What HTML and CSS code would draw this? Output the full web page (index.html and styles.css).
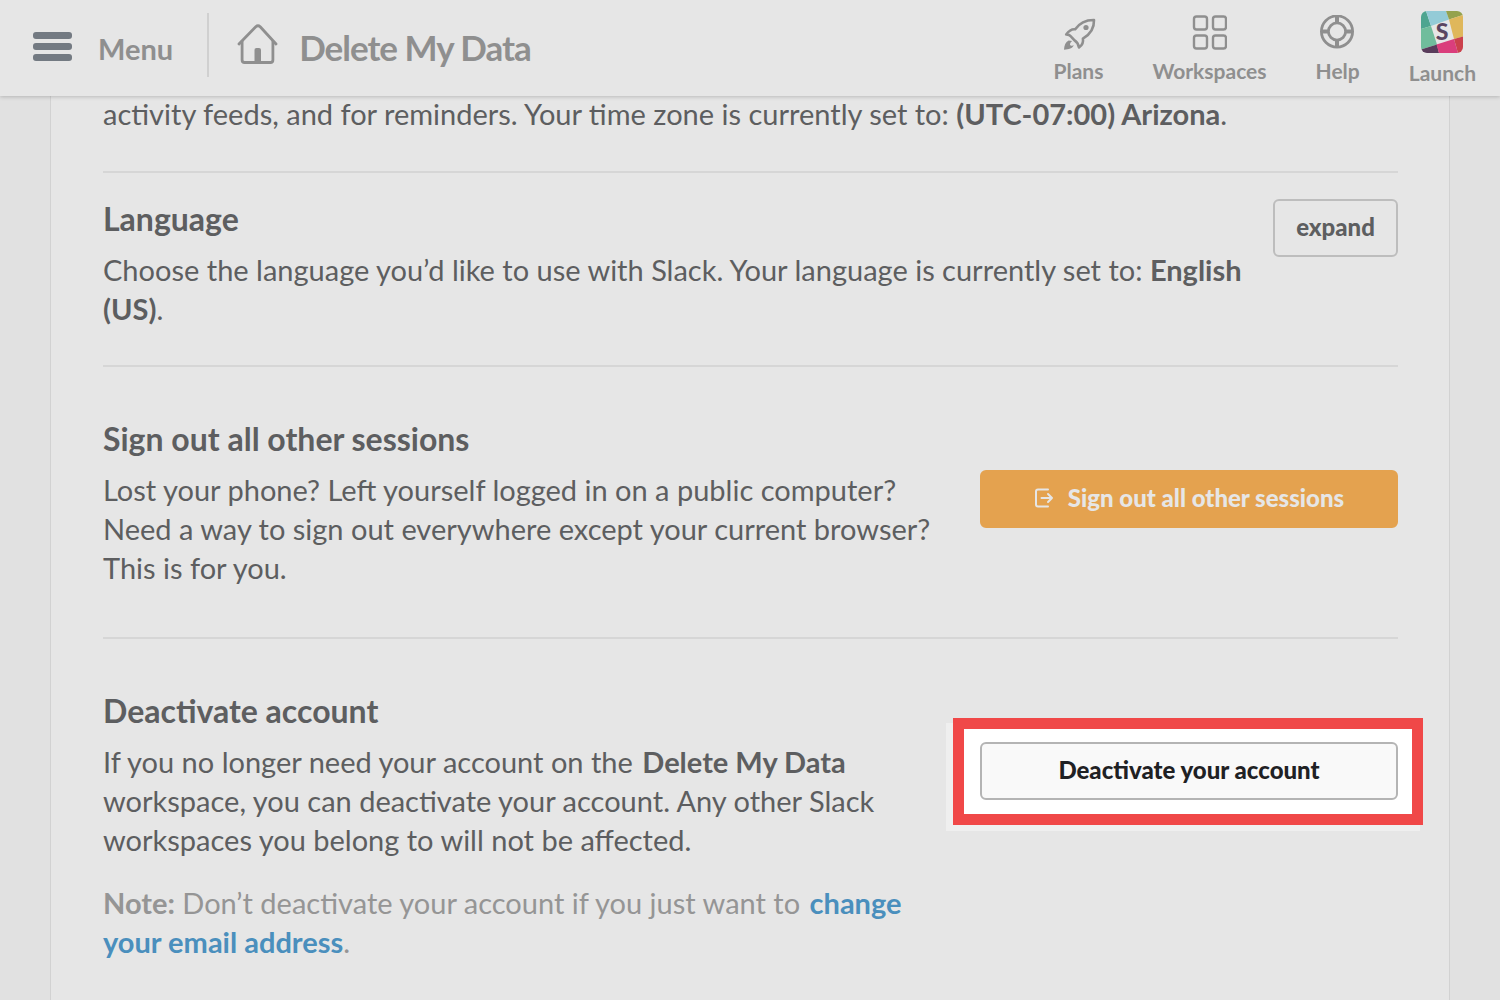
FILE: index.html
```html
<!DOCTYPE html>
<html lang="en">
<head>
<meta charset="utf-8">
<meta name="viewport" content="width=device-width, initial-scale=1">
<title>Account settings | Delete My Data</title>
<link rel="stylesheet" href="styles.css">
</head>
<body>
<header class="topbar">
  <button class="menu" type="button">
    <svg class="menu-icon" width="40" height="30" viewBox="0 0 40 30" aria-hidden="true">
      <rect x="1" y="0" width="39" height="7" rx="3"/>
      <rect x="1" y="11" width="39" height="7" rx="3"/>
      <rect x="1" y="22" width="39" height="7" rx="3"/>
    </svg>
    <span>Menu</span>
  </button>
  <a class="team" href="#">
    <svg width="42" height="42" viewBox="0 0 42 42" fill="none" stroke="#8f8f8f" stroke-width="2.8" stroke-linecap="round" stroke-linejoin="round" aria-hidden="true">
      <path d="M2 20 L18.800 2.700 Q21 0.700 23.200 2.700 L39 20"/>
      <path d="M5.100 17.500 V36 Q5.100 38.500 7.600 38.500 H33.400 Q35.900 38.500 35.900 36 V17.500"/>
      <path d="M17.500 38.500 V26 Q17.500 24 19.500 24 H22 Q24 24 24 26 V38.500 Z" fill="#8f8f8f" stroke="none"/>
    </svg>
    <span>Delete My Data</span>
  </a>
  <nav class="links" aria-label="Site">
    <a href="#">
      <svg width="36" height="36" viewBox="0 0 36 36" fill="none" stroke="#8f8f8f" stroke-width="2.6" stroke-linejoin="round" aria-hidden="true">
        <path d="M34 5 C26 4.900 19.500 8 15.200 14.300 C11.500 13.800 9 15.600 6.200 19.400 Q9.500 19.500 11.300 21.800 L14.300 25.200 Q18 27.500 19 32.500 C22.500 30 23.600 27.300 22.900 23.700 C30 19.500 34.300 13.500 34 5 Z"/>
        <circle cx="26" cy="12.500" r="2.600" fill="#8f8f8f" stroke="none"/>
        <path d="M8.600 25.400 C5.500 27 4.200 30 4 34.800 C9 34.400 12.500 33.500 13.800 30.300 C12 31 10.500 30.600 10 29.700 C10 28 11 26.800 12.200 26 Z" fill="#8f8f8f" stroke="none"/>
      </svg>
      <span>Plans</span>
    </a>
    <a href="#">
      <svg width="36" height="36" viewBox="0 0 36 36" fill="none" stroke="#8f8f8f" stroke-width="2.400" aria-hidden="true">
        <rect x="3" y="1.500" width="13" height="13" rx="2.500"/>
        <rect x="22" y="1.500" width="13" height="13" rx="2.500"/>
        <rect x="3" y="20.500" width="13" height="13" rx="2.500"/>
        <rect x="22" y="20.500" width="13" height="13" rx="2.500"/>
      </svg>
      <span>Workspaces</span>
    </a>
    <a href="#">
      <svg width="36" height="36" viewBox="0 -2 36 36" fill="none" stroke="#8f8f8f" stroke-width="2.800" aria-hidden="true">
        <circle cx="17" cy="14.500" r="15.600"/>
        <circle cx="17" cy="14.500" r="8.600"/>
        <path d="M17 -1 V6 M17 23 V30 M1.500 14.500 H8.500 M25.500 14.500 H32.500" stroke-width="4"/>
      </svg>
      <span>Help</span>
    </a>
    <a class="launch" href="#">
      <svg width="42" height="42" viewBox="0 0 42 42" aria-hidden="true">
        <defs><clipPath id="tile"><rect width="42" height="42" rx="6"/></clipPath></defs>
        <g clip-path="url(#tile)">
          <rect width="42" height="42" fill="#e6e6e6"/>
          <path d="M0 0 H5 L10 15 L0 18 Z" fill="#4ea590"/>
          <path d="M5 0 H25 L28 8.500 L10 15 Z" fill="#94cbd7"/>
          <path d="M25 0 H42 V4 L28 8.500 Z" fill="#94a24d"/>
          <path d="M28 8.500 L42 4 V25.500 L33 28 Z" fill="#dfb75b"/>
          <path d="M0 18 L10 15 L16 33.500 L0 38.500 Z" fill="#70bd9c"/>
          <path d="M0 38.500 L16 33.500 L18 42 H0 Z" fill="#593c5b"/>
          <path d="M15.500 33.500 L33 28 L37 42 H18 Z" fill="#da3e7c"/>
          <path d="M33 28 L42 25.500 V42 H37 Z" fill="#cb414c"/>
        </g>
        <text class="launch-letter" x="21" y="29" text-anchor="middle">S</text>
      </svg>
      <span>Launch</span>
    </a>
  </nav>
</header>

<main class="page">
  <section class="setting setting-intro">
    <p>activity feeds, and for reminders. Your time zone is currently set to: <strong>(UTC-07:00) Arizona</strong>.</p>
  </section>

  <section class="setting setting-compact">
    <div>
      <h2>Language</h2>
      <p>Choose the language you’d like to use with Slack. Your language is currently set to: <strong>English (US)</strong>.</p>
    </div>
    <button class="btn" type="button">expand</button>
  </section>

  <section class="setting setting-action">
    <div>
      <h2>Sign out all other sessions</h2>
      <p>Lost your phone? Left yourself logged in on a public computer? Need a way to sign out everywhere except your current browser? This is for you.</p>
    </div>
    <button class="btn btn-warning" type="button">
      <svg width="20" height="20" viewBox="0 0 20 20" fill="none" stroke="#e6e6e6" stroke-width="2" stroke-linecap="round" stroke-linejoin="round" aria-hidden="true">
        <path d="M14 1.500 H4 Q2 1.500 2 3.500 V16.500 Q2 18.500 4 18.500 H14"/>
        <path d="M7.500 10 H18 M14 6 L18 10 L14 14"/>
      </svg>
      <span>Sign out all other sessions</span>
    </button>
  </section>

  <section class="setting setting-action">
    <div>
      <h2>Deactivate account</h2>
      <p>If you no longer need your account on the <strong class="spaced">Delete My Data</strong> workspace, you can deactivate your account. Any other Slack workspaces you belong to will not be affected.</p>
      <p class="note"><strong>Note:</strong> Don’t deactivate your account if you just want to <a class="spaced" href="#">change your email address</a>.</p>
    </div>
    <div class="highlight">
      <button class="btn btn-focus" type="button">Deactivate your account</button>
    </div>
  </section>
</main>
</body>
</html>
```
FILE: styles.css
```css
* {
  box-sizing: border-box;
}

body {
  margin: 0;
  background: #e1e1e1;
  color: #5d5e60;
  font-family: Lato, "Liberation Sans", sans-serif;
  font-size: 29px;
  line-height: 39px;
}

button {
  font: inherit;
  cursor: pointer;
}

a {
  text-decoration: none;
}

/* Top bar */
.topbar {
  position: sticky;
  top: 0;
  z-index: 2;
  display: flex;
  align-items: center;
  height: 96px;
  padding: 0 24px 6px 32px;
  background: #e6e6e6;
  box-shadow: 0 1px 4px rgba(0, 0, 0, 0.2);
  color: #8f8f8f;
  font-weight: 700;
}

.menu {
  display: flex;
  align-items: center;
  gap: 26px;
  height: 64px;
  padding: 6px 34px 0 0;
  border: 0;
  border-right: 2px solid #d0d0d0;
  background: none;
  color: inherit;
  font-size: 29px;
  font-weight: 700;
}

.menu-icon {
  margin-bottom: 2px;
  fill: #737a82;
}

.team {
  display: flex;
  align-items: center;
  gap: 20px;
  margin-right: auto;
  padding-left: 28px;
  color: inherit;
  font-size: 35px;
  letter-spacing: -1px;
}

.team span {
  padding-top: 4px;
}

.links {
  display: flex;
  gap: 49px;
  margin-top: 6px;
  font-size: 21px;
  line-height: 24px;
}

.links a {
  display: flex;
  flex-direction: column;
  align-items: center;
  gap: 8px;
  padding-top: 4px;
  color: inherit;
}

.links .launch {
  padding-top: 0;
}

.launch-letter {
  fill: #5a4560;
  font-size: 23px;
  font-weight: 900;
}

/* Settings card */
.page {
  min-height: 906px;
  margin: -2px 50px 0;
  padding: 0 51px 0 52px;
  border: solid #d2d2d2;
  border-width: 0 1px;
  background: #e6e6e6;
}

h2,
p {
  margin: 0;
}

h2 {
  margin-bottom: 12px;
  font-size: 32px;
  font-weight: 700;
}

.setting {
  display: grid;
  align-items: start;
  border-bottom: 2px solid #d6d6d6;
}

.setting:last-child {
  border-bottom: 0;
}

.setting-intro {
  padding-bottom: 38px;
}

.setting-compact {
  grid-template-columns: 1fr 125px;
  column-gap: 30px;
  padding: 26px 0 37px;
}

.setting-action {
  grid-template-columns: 1fr 418px;
  column-gap: 48px;
  padding: 52px 0 50px;
}

.setting-action > .btn,
.setting-action > .highlight {
  margin-top: 51px;
}

.spaced {
  margin-left: 2px;
}

.note {
  margin-top: 24px;
  color: #959595;
}

.note a {
  color: #4a8fbd;
  font-weight: 700;
}

/* Buttons */
.btn {
  display: flex;
  align-items: center;
  justify-content: center;
  gap: 14px;
  width: 100%;
  height: 58px;
  padding: 0 0 3px;
  border: 2px solid #bdbdbd;
  border-radius: 6px;
  background: #e6e6e6;
  color: #5d5e60;
  font-size: 24px;
  font-weight: 900;
}

.btn-warning {
  border-color: #e4a24f;
  background: #e4a24f;
  color: #e6e6e6;
}

.btn-focus {
  border-color: #b4b4b4;
  background: #f9f9f9;
  color: #1f2124;
}

/* Red frame around the button, with a pale offset panel behind it */
.highlight {
  position: relative;
}

.highlight .btn {
  position: relative;
  z-index: 1;
}

.highlight::before {
  content: "";
  position: absolute;
  inset: -19px -22px -31px -34px;
  background: #efefef;
}

.highlight::after {
  content: "";
  position: absolute;
  inset: -24px -25px -25px -27px;
  border: 11px solid #f04848;
  background: #fff;
}
```
